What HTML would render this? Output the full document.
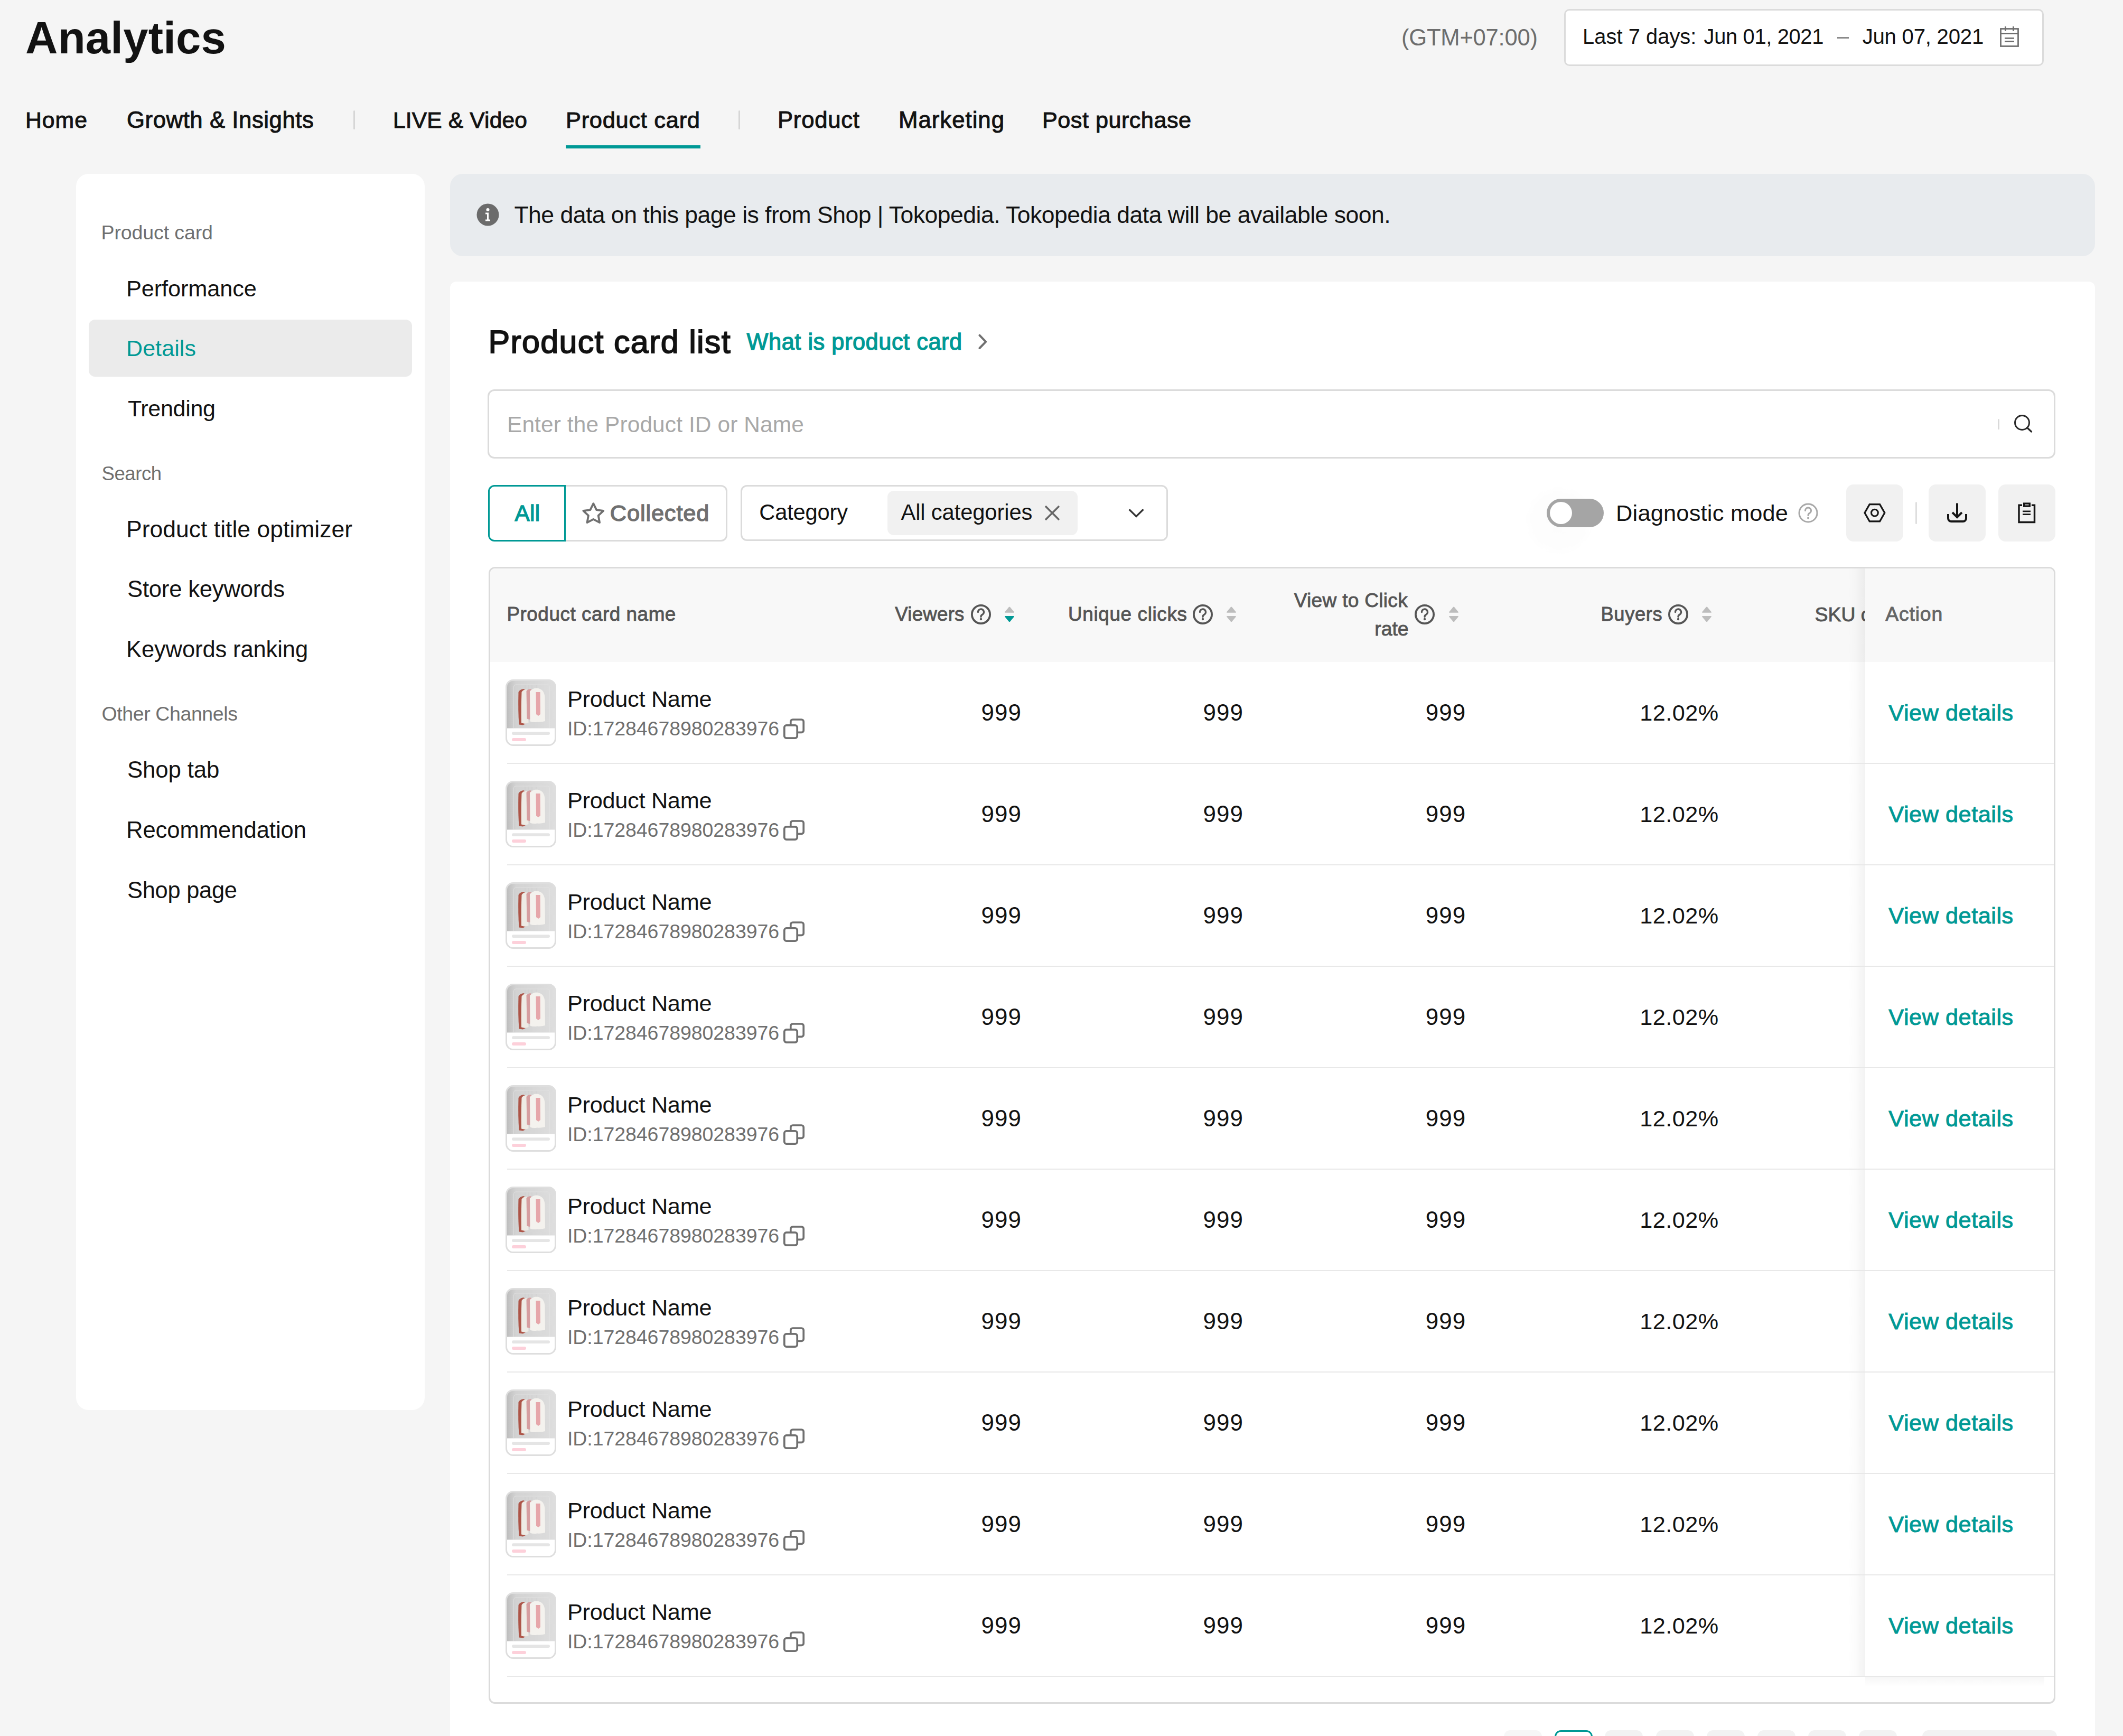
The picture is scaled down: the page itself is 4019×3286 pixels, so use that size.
<!DOCTYPE html>
<html><head><meta charset="utf-8"><style>
html,body{margin:0;padding:0;}
body{width:4019px;height:3286px;overflow:hidden;background:#f5f5f5;position:relative;font-family:"Liberation Sans",sans-serif;}
.t{position:absolute;white-space:nowrap;}
.b{position:absolute;}
.s{position:absolute;overflow:visible;}
</style></head><body>
<svg width="0" height="0" style="position:absolute"><symbol id="th" viewBox="0 0 96 126">
<defs><clipPath id="thc"><rect x="1.5" y="1.5" width="93" height="123" rx="13"/></clipPath>
<linearGradient id="thg" x1="0" x2="1" y1="0" y2="0"><stop offset="0" stop-color="#bababa"/><stop offset="0.2" stop-color="#d2d2d2"/><stop offset="1" stop-color="#dedede"/></linearGradient></defs>
<g clip-path="url(#thc)">
<rect x="0" y="0" width="96" height="126" fill="#fff"/>
<rect x="0" y="0" width="96" height="92.5" fill="url(#thg)"/>
<path d="M15.5 92V14a4 4 0 0 1 4-4h60a4 4 0 0 1 4 4v78" fill="none" stroke="#e2e2e2" stroke-width="0.8"/>
<path d="M37 11v8M44 11v8M50 11v8M58 11v6" stroke="#c4c4c4" stroke-width="0.5"/>
<path d="M24.5 24Q27 19 34 18L38 20L38 84L33 86.5L25.5 85.5Q23.5 60 24.5 24z" fill="#ad5548"/>
<path d="M30.5 24Q33 19.5 39 19L43 21L43.5 82L37 84L30 82.5Q29.5 50 30.5 24z" fill="#eeebe5"/>
<path d="M39.5 22Q42 18.5 47 18L50 20L50.5 74L45 76L40.5 74.5z" fill="#d69ea0"/>
<path d="M46 22.5Q51 17 58 16.5Q66 17 70.5 22Q74 27 74.5 34L75 79Q67 81.5 60 80.5Q52 82 46.5 79.5z" fill="#f4f2ee"/>
<path d="M57.5 24L65.6 24L66 66L62 69L58 66z" fill="#e6a6aa"/>
<rect x="12" y="99.2" width="72" height="5.8" rx="2.9" fill="#e5e5e5"/>
<rect x="12" y="111" width="27" height="6" rx="3" fill="#fdd0da"/>
</g>
<rect x="1.5" y="1.5" width="93" height="123" rx="13" fill="none" stroke="#dedede" stroke-width="3"/>
</symbol></svg>
<div class="t" style="left:48.00px;top:29.00px;font-size:85.02px;line-height:85.02px;letter-spacing:0.232px;color:#121212;font-weight:700;">Analytics</div>
<div class="t" style="left:2653.00px;top:49.00px;font-size:43.66px;line-height:43.66px;letter-spacing:-0.285px;color:#6d6d6d;">(GTM+07:00)</div>
<div class="b" style="left:2961px;top:17px;width:908px;height:107.5px;border:3px solid #dbdbdb;border-radius:10px;background:#fff;box-sizing:border-box;"></div>
<div class="t" style="left:2996.00px;top:50.00px;font-size:39.83px;line-height:39.83px;letter-spacing:0.058px;color:#121212;">Last 7 days:</div>
<div class="t" style="left:3225.60px;top:50.00px;font-size:39.89px;line-height:39.89px;letter-spacing:-0.349px;color:#121212;">Jun 01, 2021</div>
<div class="b" style="left:3478px;top:70px;width:21.5px;height:3px;background:#8a8a8a;"></div>
<div class="t" style="left:3525.70px;top:50.00px;font-size:40.21px;line-height:40.21px;letter-spacing:-0.266px;color:#121212;">Jun 07, 2021</div>
<svg class="s" style="left:3784px;top:48px" width="40" height="44" viewBox="0 0 40 44"><rect x="3.5" y="6.5" width="33" height="33" fill="none" stroke="#6f6f6f" stroke-width="2.8"/><path d="M3.5 15.4h33M12.5 2v8.8M27.5 2v8.8M11 24.4h18M11 30.5h18" stroke="#6f6f6f" stroke-width="2.9"/></svg>
<div class="t" style="left:48.00px;top:206.00px;font-size:42.73px;line-height:42.73px;letter-spacing:1.001px;color:#121212;-webkit-text-stroke:1.0px #121212;">Home</div>
<div class="t" style="left:240.00px;top:205.00px;font-size:43.70px;line-height:43.70px;letter-spacing:0.570px;color:#121212;-webkit-text-stroke:1.0px #121212;">Growth &amp; Insights</div>
<div class="t" style="left:744.00px;top:206.00px;font-size:42.53px;line-height:42.53px;letter-spacing:0.163px;color:#121212;-webkit-text-stroke:1.0px #121212;">LIVE &amp; Video</div>
<div class="t" style="left:1071.00px;top:206.00px;font-size:43.41px;line-height:43.41px;letter-spacing:0.714px;color:#121212;-webkit-text-stroke:1.0px #121212;">Product card</div>
<div class="t" style="left:1472.00px;top:205.00px;font-size:43.70px;line-height:43.70px;letter-spacing:0.723px;color:#121212;-webkit-text-stroke:1.0px #121212;">Product</div>
<div class="t" style="left:1701.00px;top:205.00px;font-size:43.80px;line-height:43.80px;letter-spacing:0.963px;color:#121212;-webkit-text-stroke:1.0px #121212;">Marketing</div>
<div class="t" style="left:1973.00px;top:206.00px;font-size:43.19px;line-height:43.19px;letter-spacing:0.493px;color:#121212;-webkit-text-stroke:1.0px #121212;">Post purchase</div>
<div class="b" style="left:669px;top:209px;width:3px;height:36px;background:#d6d6d6;border-radius:2px;"></div>
<div class="b" style="left:1398px;top:209px;width:3px;height:36px;background:#d6d6d6;border-radius:2px;"></div>
<div class="b" style="left:1071px;top:275px;width:255px;height:6px;background:#009995;"></div>
<div class="b" style="left:144px;top:329px;width:660px;height:2340px;background:#fff;border-radius:24px;"></div>
<div class="b" style="left:168px;top:605px;width:612px;height:108px;background:#ebebeb;border-radius:12px;"></div>
<div class="t" style="left:191.60px;top:422.00px;font-size:37.55px;line-height:37.55px;letter-spacing:-0.135px;color:#6f6f6f;">Product card</div>
<div class="t" style="left:192.60px;top:879.00px;font-size:36.55px;line-height:36.55px;letter-spacing:-0.478px;color:#6f6f6f;">Search</div>
<div class="t" style="left:192.60px;top:1333.00px;font-size:37.46px;line-height:37.46px;letter-spacing:-0.386px;color:#6f6f6f;">Other Channels</div>
<div class="t" style="left:239.00px;top:525.00px;font-size:43.36px;line-height:43.36px;letter-spacing:-0.124px;color:#121212;">Performance</div>
<div class="t" style="left:239.00px;top:638.00px;font-size:42.98px;line-height:42.98px;letter-spacing:0.097px;color:#009995;">Details</div>
<div class="t" style="left:242.00px;top:752.00px;font-size:43.03px;line-height:43.03px;letter-spacing:-0.323px;color:#121212;">Trending</div>
<div class="t" style="left:239.00px;top:980.00px;font-size:44.50px;line-height:44.50px;letter-spacing:0.005px;color:#121212;">Product title optimizer</div>
<div class="t" style="left:241.00px;top:1093.00px;font-size:43.69px;line-height:43.69px;letter-spacing:-0.238px;color:#121212;">Store keywords</div>
<div class="t" style="left:239.00px;top:1208.00px;font-size:43.50px;line-height:43.50px;letter-spacing:-0.112px;color:#121212;">Keywords ranking</div>
<div class="t" style="left:241.00px;top:1435.00px;font-size:43.82px;line-height:43.82px;letter-spacing:-0.140px;color:#121212;">Shop tab</div>
<div class="t" style="left:239.00px;top:1550.00px;font-size:43.60px;line-height:43.60px;letter-spacing:-0.052px;color:#121212;">Recommendation</div>
<div class="t" style="left:241.00px;top:1664.00px;font-size:43.45px;line-height:43.45px;letter-spacing:-0.274px;color:#121212;">Shop page</div>
<div class="b" style="left:852px;top:329px;width:3114px;height:156px;background:#e8ebee;border-radius:24px;"></div>
<svg class="s" style="left:902px;top:385px" width="43" height="43" viewBox="0 0 43 43"><circle cx="21.5" cy="21.5" r="21" fill="#6b6b6b"/><circle cx="21.5" cy="12" r="3" fill="#fff"/><path d="M17 17.5h6v13h3v3h-9v-3h3v-10h-3z" fill="#fff"/></svg>
<div class="t" style="left:973.40px;top:385.00px;font-size:44.57px;line-height:44.57px;letter-spacing:-0.533px;color:#121212;">The data on this page is from Shop | Tokopedia. Tokopedia data will be available soon.</div>
<div class="b" style="left:852px;top:533px;width:3114px;height:2867px;background:#fff;border-radius:12px;"></div>
<div class="t" style="left:924.50px;top:617.00px;font-size:60.98px;line-height:60.98px;letter-spacing:1.311px;color:#121212;-webkit-text-stroke:1.8px #121212;">Product card list</div>
<div class="t" style="left:1413.50px;top:626.00px;font-size:43.44px;line-height:43.44px;letter-spacing:0.492px;color:#009995;-webkit-text-stroke:1.3px #009995;">What is product card</div>
<svg class="s" style="left:1844px;top:630px" width="28" height="36" viewBox="0 0 28 36"><path d="M10.4 4.6L22.2 16.8L10.4 29" fill="none" stroke="#707070" stroke-width="4" stroke-linecap="round" stroke-linejoin="round"/></svg>
<div class="b" style="left:923px;top:737px;width:2968px;height:131px;border:3px solid #dbdbdb;border-radius:13px;box-sizing:border-box;"></div>
<div class="t" style="left:960.00px;top:783.00px;font-size:42.39px;line-height:42.39px;letter-spacing:0.134px;color:#a8a8a8;">Enter the Product ID or Name</div>
<div class="b" style="left:3781.5px;top:793px;width:3.0px;height:20px;background:#d9d9d9;border-radius:2px;"></div>
<svg class="s" style="left:3808px;top:780px" width="44" height="44" viewBox="0 0 44 44"><circle cx="20" cy="20" r="13.5" fill="none" stroke="#2a2a2a" stroke-width="3"/><path d="M29.5 29.5l8 7.5" stroke="#2a2a2a" stroke-width="3.2" stroke-linecap="round"/></svg>
<div class="b" style="left:924px;top:917.5px;width:147px;height:107.0px;border:3px solid #009995;border-radius:12px 0 0 12px;box-sizing:border-box;z-index:2;"></div>
<div class="b" style="left:1070px;top:917.5px;width:306.5px;height:107.0px;border:3px solid #dbdbdb;border-left:none;border-radius:0 12px 12px 0;box-sizing:border-box;"></div>
<div class="t" style="left:974.50px;top:951.00px;font-size:42.27px;line-height:42.27px;letter-spacing:0.286px;color:#009995;-webkit-text-stroke:1.4px #009995;">All</div>
<svg class="s" style="left:1100px;top:948px" width="46" height="46" viewBox="0 0 46 46"><path d="M23.3 5.2l5.9 12 13.1 1.6-9.6 9.1 2.4 13.3L23.3 34.8l-11.8 6.4 2.4-13.3-9.6-9.1 13.1-1.6z" fill="none" stroke="#707070" stroke-width="3.8" stroke-linejoin="round"/></svg>
<div class="t" style="left:1154.80px;top:950.00px;font-size:43.33px;line-height:43.33px;letter-spacing:0.864px;color:#707070;-webkit-text-stroke:1.4px #707070;">Collected</div>
<div class="b" style="left:1402px;top:918px;width:808.5px;height:105.5px;border:3px solid #dbdbdb;border-radius:12px;box-sizing:border-box;"></div>
<div class="t" style="left:1437.30px;top:949.00px;font-size:41.72px;line-height:41.72px;letter-spacing:-0.213px;color:#121212;">Category</div>
<div class="b" style="left:1680px;top:929px;width:360px;height:83.5px;background:#f1f1f1;border-radius:12px;"></div>
<div class="t" style="left:1705.40px;top:949.00px;font-size:41.82px;line-height:41.82px;letter-spacing:-0.154px;color:#121212;">All categories</div>
<svg class="s" style="left:1974px;top:953px" width="36" height="36" viewBox="0 0 36 36"><path d="M5 5l26 26M31 5L5 31" stroke="#666" stroke-width="3.5"/></svg>
<svg class="s" style="left:2132px;top:958px" width="38" height="26" viewBox="0 0 38 26"><path d="M5.6 6.2L19 19.4L32.4 6.2" fill="none" stroke="#333" stroke-width="3.3"/></svg>
<div class="b" style="left:2885px;top:918px;width:134px;height:134px;background:radial-gradient(circle,rgba(0,0,0,0.01) 0,rgba(0,0,0,0.008) 55%,rgba(0,0,0,0) 71%);border-radius:50%;"></div>
<div class="b" style="left:2928px;top:944px;width:108px;height:54px;background:#a5a5a5;border-radius:27px;"></div>
<div class="b" style="left:2934px;top:950px;width:42px;height:42px;background:#fff;border-radius:50%;"></div>
<div class="t" style="left:3059.00px;top:950.00px;font-size:43.37px;line-height:43.37px;letter-spacing:0.217px;color:#121212;">Diagnostic mode</div>
<svg class="s" style="left:3403px;top:951px" width="40" height="40" viewBox="0 0 40 40"><circle cx="20" cy="20" r="17" fill="none" stroke="#a8a8a8" stroke-width="3"/><path d="M14.5 15.5a5.5 5.5 0 1 1 8 4.9c-1.8 1-2.5 2.2-2.5 4.1" fill="none" stroke="#a8a8a8" stroke-width="3" stroke-linecap="round"/><circle cx="20" cy="29.5" r="2" fill="#a8a8a8"/></svg>
<div class="b" style="left:3495px;top:917px;width:108px;height:108px;background:#f1f1f1;border-radius:14px;"></div>
<div class="b" style="left:3651px;top:917px;width:108px;height:108px;background:#f1f1f1;border-radius:14px;"></div>
<div class="b" style="left:3783px;top:917px;width:108px;height:108px;background:#f1f1f1;border-radius:14px;"></div>
<div class="b" style="left:3625.5px;top:950px;width:3.0px;height:42px;background:#dedede;border-radius:2px;"></div>
<svg class="s" style="left:3526px;top:950px" width="46" height="42" viewBox="0 0 46 42"><path d="M13.2 4.6h19.4l9.2 16.1-9.2 16.1h-19.4l-9.2-16.1z" fill="none" stroke="#161616" stroke-width="3.2" stroke-linejoin="miter"/><circle cx="22.9" cy="20.7" r="6.4" fill="none" stroke="#161616" stroke-width="3.1"/></svg>
<svg class="s" style="left:3683px;top:950px" width="44" height="42" viewBox="0 0 44 42"><path d="M22 2.5v28" stroke="#161616" stroke-width="4"/><path d="M13 20l9 9 9-9" fill="none" stroke="#161616" stroke-width="4"/><path d="M5 23v8a6 6 0 0 0 6 6h22a6 6 0 0 0 6-6v-8" fill="none" stroke="#161616" stroke-width="4"/></svg>
<svg class="s" style="left:3816px;top:948px" width="42" height="46" viewBox="0 0 42 46"><path d="M12 8.3H6v32.2h29.5V8.3H30" fill="none" stroke="#161616" stroke-width="3.4"/><rect x="15.7" y="5.1" width="10.6" height="5" fill="none" stroke="#161616" stroke-width="3.4"/><path d="M13 19.8h15M13 25.7h15" stroke="#161616" stroke-width="2.8"/></svg>
<div class="b" style="left:924.5px;top:1073px;width:2966.0px;height:2152px;border:3px solid #dbdbdb;border-radius:12px;box-sizing:border-box;"></div>
<div class="b" style="left:927.5px;top:1076px;width:2960.0px;height:177px;background:#f8f8f8;border-radius:9px 9px 0 0;"></div>
<div class="t" style="left:959.40px;top:1145.00px;font-size:36.84px;line-height:36.84px;letter-spacing:0.550px;color:#555555;-webkit-text-stroke:0.9px #555555;">Product card name</div>
<div class="t" style="left:1694.30px;top:1145.00px;font-size:36.68px;line-height:36.68px;letter-spacing:0.224px;color:#555555;-webkit-text-stroke:0.9px #555555;">Viewers</div>
<div class="t" style="left:2022.00px;top:1145.00px;font-size:36.90px;line-height:36.90px;letter-spacing:0.637px;color:#555555;-webkit-text-stroke:0.9px #555555;">Unique clicks</div>
<div class="t" style="left:2449.70px;top:1118.00px;font-size:37.08px;line-height:37.08px;letter-spacing:0.290px;color:#555555;-webkit-text-stroke:0.9px #555555;">View to Click</div>
<div class="t" style="left:2602.20px;top:1172.00px;font-size:37.40px;line-height:37.40px;letter-spacing:0.000px;color:#555555;-webkit-text-stroke:0.9px #555555;">rate</div>
<div class="t" style="left:3030.50px;top:1145.00px;font-size:36.26px;line-height:36.26px;letter-spacing:0.650px;color:#555555;-webkit-text-stroke:0.9px #555555;">Buyers</div>
<svg class="s" style="left:1837px;top:1143px" width="40" height="40" viewBox="0 0 40 40"><circle cx="20" cy="20" r="17.1" fill="none" stroke="#555" stroke-width="3.8"/><path d="M14.5 15.5a5.5 5.5 0 1 1 8 4.9c-1.8 1-2.5 2.2-2.5 4.1" fill="none" stroke="#555" stroke-width="3.4" stroke-linecap="round"/><circle cx="20" cy="29" r="2.2" fill="#555"/></svg>
<svg class="s" style="left:1901.0px;top:1146px" width="20" height="34" viewBox="0 0 20 34"><path d="M10 2.6Q10.7 2.6 11.2 3.2L18.7 12.3Q19.5 13.8 17.8 13.8H2.2Q0.5 13.8 1.3 12.3L8.8 3.2Q9.3 2.6 10 2.6z" fill="#bdbdbd"/><path d="M10 31.1Q10.7 31.1 11.2 30.5L18.7 21.4Q19.5 19.9 17.8 19.9H2.2Q0.5 19.9 1.3 21.4L8.8 30.5Q9.3 31.1 10 31.1z" fill="#009995"/></svg>
<svg class="s" style="left:2256.6px;top:1143px" width="40" height="40" viewBox="0 0 40 40"><circle cx="20" cy="20" r="17.1" fill="none" stroke="#555" stroke-width="3.8"/><path d="M14.5 15.5a5.5 5.5 0 1 1 8 4.9c-1.8 1-2.5 2.2-2.5 4.1" fill="none" stroke="#555" stroke-width="3.4" stroke-linecap="round"/><circle cx="20" cy="29" r="2.2" fill="#555"/></svg>
<svg class="s" style="left:2320.5px;top:1146px" width="20" height="34" viewBox="0 0 20 34"><path d="M10 2.6Q10.7 2.6 11.2 3.2L18.7 12.3Q19.5 13.8 17.8 13.8H2.2Q0.5 13.8 1.3 12.3L8.8 3.2Q9.3 2.6 10 2.6z" fill="#bdbdbd"/><path d="M10 31.1Q10.7 31.1 11.2 30.5L18.7 21.4Q19.5 19.9 17.8 19.9H2.2Q0.5 19.9 1.3 21.4L8.8 30.5Q9.3 31.1 10 31.1z" fill="#bdbdbd"/></svg>
<svg class="s" style="left:2676.7px;top:1143px" width="40" height="40" viewBox="0 0 40 40"><circle cx="20" cy="20" r="17.1" fill="none" stroke="#555" stroke-width="3.8"/><path d="M14.5 15.5a5.5 5.5 0 1 1 8 4.9c-1.8 1-2.5 2.2-2.5 4.1" fill="none" stroke="#555" stroke-width="3.4" stroke-linecap="round"/><circle cx="20" cy="29" r="2.2" fill="#555"/></svg>
<svg class="s" style="left:2741.5px;top:1146px" width="20" height="34" viewBox="0 0 20 34"><path d="M10 2.6Q10.7 2.6 11.2 3.2L18.7 12.3Q19.5 13.8 17.8 13.8H2.2Q0.5 13.8 1.3 12.3L8.8 3.2Q9.3 2.6 10 2.6z" fill="#bdbdbd"/><path d="M10 31.1Q10.7 31.1 11.2 30.5L18.7 21.4Q19.5 19.9 17.8 19.9H2.2Q0.5 19.9 1.3 21.4L8.8 30.5Q9.3 31.1 10 31.1z" fill="#bdbdbd"/></svg>
<svg class="s" style="left:3157px;top:1143px" width="40" height="40" viewBox="0 0 40 40"><circle cx="20" cy="20" r="17.1" fill="none" stroke="#555" stroke-width="3.8"/><path d="M14.5 15.5a5.5 5.5 0 1 1 8 4.9c-1.8 1-2.5 2.2-2.5 4.1" fill="none" stroke="#555" stroke-width="3.4" stroke-linecap="round"/><circle cx="20" cy="29" r="2.2" fill="#555"/></svg>
<svg class="s" style="left:3220.5px;top:1146px" width="20" height="34" viewBox="0 0 20 34"><path d="M10 2.6Q10.7 2.6 11.2 3.2L18.7 12.3Q19.5 13.8 17.8 13.8H2.2Q0.5 13.8 1.3 12.3L8.8 3.2Q9.3 2.6 10 2.6z" fill="#bdbdbd"/><path d="M10 31.1Q10.7 31.1 11.2 30.5L18.7 21.4Q19.5 19.9 17.8 19.9H2.2Q0.5 19.9 1.3 21.4L8.8 30.5Q9.3 31.1 10 31.1z" fill="#bdbdbd"/></svg>
<div class="b" style="left:3400px;top:1100px;width:131px;height:120px;overflow:hidden;">
<div class="t" style="left:35.50px;top:45.00px;font-size:37.40px;line-height:37.40px;letter-spacing:0.000px;color:#555555;-webkit-text-stroke:0.9px #555555;">SKU c</div>
</div>
<div class="b" style="left:3531px;top:1076px;width:356.5px;height:177px;background:#f8f8f8;border-radius:0 9px 0 0;"></div>
<div class="b" style="left:3531px;top:1253px;width:356.5px;height:1920px;background:#fff;"></div>
<div class="b" style="left:3499px;top:1076px;width:32px;height:2097px;background:linear-gradient(to right,rgba(0,0,0,0),rgba(0,0,0,0.012) 40%,rgba(0,0,0,0.05));"></div>
<div class="b" style="left:3531px;top:3173px;width:339px;height:20px;background:linear-gradient(to bottom,rgba(0,0,0,0.035),rgba(0,0,0,0));"></div>
<div class="t" style="left:3569.20px;top:1144.00px;font-size:37.45px;line-height:37.45px;letter-spacing:0.799px;color:#666;-webkit-text-stroke:0.9px #666;">Action</div>
<svg class="s" style="left:957px;top:1286px" width="96" height="126"><use href="#th"/></svg>
<div class="t" style="left:1074.00px;top:1302.00px;font-size:43.31px;line-height:43.31px;letter-spacing:-0.294px;color:#121212;">Product Name</div>
<div class="t" style="left:1074.00px;top:1361.00px;font-size:37.51px;line-height:37.51px;letter-spacing:-0.073px;color:#6f6f6f;">ID:17284678980283976</div>
<svg class="s" style="left:1482px;top:1358.5px" width="42" height="42" viewBox="0 0 42 42"><rect x="2.8" y="13.8" width="24.4" height="24.4" rx="4" fill="none" stroke="#707070" stroke-width="3.7"/><path d="M14.8 12V7a4 4 0 0 1 4-4h16.4a4 4 0 0 1 4 4v16.4a4 4 0 0 1-4 4H28" fill="none" stroke="#707070" stroke-width="3.7"/></svg>
<div class="t" style="left:1857.50px;top:1327.00px;font-size:43.95px;line-height:43.95px;letter-spacing:1.058px;color:#121212;">999</div>
<div class="t" style="left:2277.50px;top:1327.00px;font-size:43.95px;line-height:43.95px;letter-spacing:1.058px;color:#121212;">999</div>
<div class="t" style="left:2698.80px;top:1327.00px;font-size:43.95px;line-height:43.95px;letter-spacing:1.058px;color:#121212;">999</div>
<div class="t" style="left:3104.30px;top:1328.00px;font-size:43.20px;line-height:43.20px;letter-spacing:0.491px;color:#121212;">12.02%</div>
<div class="t" style="left:3575.30px;top:1328.00px;font-size:43.31px;line-height:43.31px;letter-spacing:0.516px;color:#009995;-webkit-text-stroke:1.0px #009995;">View details</div>
<div class="b" style="left:959.5px;top:1444px;width:2928.0px;height:2px;background:#e8e8e8;"></div>
<svg class="s" style="left:957px;top:1478px" width="96" height="126"><use href="#th"/></svg>
<div class="t" style="left:1074.00px;top:1494.00px;font-size:43.31px;line-height:43.31px;letter-spacing:-0.294px;color:#121212;">Product Name</div>
<div class="t" style="left:1074.00px;top:1553.00px;font-size:37.51px;line-height:37.51px;letter-spacing:-0.073px;color:#6f6f6f;">ID:17284678980283976</div>
<svg class="s" style="left:1482px;top:1550.5px" width="42" height="42" viewBox="0 0 42 42"><rect x="2.8" y="13.8" width="24.4" height="24.4" rx="4" fill="none" stroke="#707070" stroke-width="3.7"/><path d="M14.8 12V7a4 4 0 0 1 4-4h16.4a4 4 0 0 1 4 4v16.4a4 4 0 0 1-4 4H28" fill="none" stroke="#707070" stroke-width="3.7"/></svg>
<div class="t" style="left:1857.50px;top:1519.00px;font-size:43.95px;line-height:43.95px;letter-spacing:1.058px;color:#121212;">999</div>
<div class="t" style="left:2277.50px;top:1519.00px;font-size:43.95px;line-height:43.95px;letter-spacing:1.058px;color:#121212;">999</div>
<div class="t" style="left:2698.80px;top:1519.00px;font-size:43.95px;line-height:43.95px;letter-spacing:1.058px;color:#121212;">999</div>
<div class="t" style="left:3104.30px;top:1520.00px;font-size:43.20px;line-height:43.20px;letter-spacing:0.491px;color:#121212;">12.02%</div>
<div class="t" style="left:3575.30px;top:1520.00px;font-size:43.31px;line-height:43.31px;letter-spacing:0.516px;color:#009995;-webkit-text-stroke:1.0px #009995;">View details</div>
<div class="b" style="left:959.5px;top:1636px;width:2928.0px;height:2px;background:#e8e8e8;"></div>
<svg class="s" style="left:957px;top:1670px" width="96" height="126"><use href="#th"/></svg>
<div class="t" style="left:1074.00px;top:1686.00px;font-size:43.31px;line-height:43.31px;letter-spacing:-0.294px;color:#121212;">Product Name</div>
<div class="t" style="left:1074.00px;top:1745.00px;font-size:37.51px;line-height:37.51px;letter-spacing:-0.073px;color:#6f6f6f;">ID:17284678980283976</div>
<svg class="s" style="left:1482px;top:1742.5px" width="42" height="42" viewBox="0 0 42 42"><rect x="2.8" y="13.8" width="24.4" height="24.4" rx="4" fill="none" stroke="#707070" stroke-width="3.7"/><path d="M14.8 12V7a4 4 0 0 1 4-4h16.4a4 4 0 0 1 4 4v16.4a4 4 0 0 1-4 4H28" fill="none" stroke="#707070" stroke-width="3.7"/></svg>
<div class="t" style="left:1857.50px;top:1711.00px;font-size:43.95px;line-height:43.95px;letter-spacing:1.058px;color:#121212;">999</div>
<div class="t" style="left:2277.50px;top:1711.00px;font-size:43.95px;line-height:43.95px;letter-spacing:1.058px;color:#121212;">999</div>
<div class="t" style="left:2698.80px;top:1711.00px;font-size:43.95px;line-height:43.95px;letter-spacing:1.058px;color:#121212;">999</div>
<div class="t" style="left:3104.30px;top:1712.00px;font-size:43.20px;line-height:43.20px;letter-spacing:0.491px;color:#121212;">12.02%</div>
<div class="t" style="left:3575.30px;top:1712.00px;font-size:43.31px;line-height:43.31px;letter-spacing:0.516px;color:#009995;-webkit-text-stroke:1.0px #009995;">View details</div>
<div class="b" style="left:959.5px;top:1828px;width:2928.0px;height:2px;background:#e8e8e8;"></div>
<svg class="s" style="left:957px;top:1862px" width="96" height="126"><use href="#th"/></svg>
<div class="t" style="left:1074.00px;top:1878.00px;font-size:43.31px;line-height:43.31px;letter-spacing:-0.294px;color:#121212;">Product Name</div>
<div class="t" style="left:1074.00px;top:1937.00px;font-size:37.51px;line-height:37.51px;letter-spacing:-0.073px;color:#6f6f6f;">ID:17284678980283976</div>
<svg class="s" style="left:1482px;top:1934.5px" width="42" height="42" viewBox="0 0 42 42"><rect x="2.8" y="13.8" width="24.4" height="24.4" rx="4" fill="none" stroke="#707070" stroke-width="3.7"/><path d="M14.8 12V7a4 4 0 0 1 4-4h16.4a4 4 0 0 1 4 4v16.4a4 4 0 0 1-4 4H28" fill="none" stroke="#707070" stroke-width="3.7"/></svg>
<div class="t" style="left:1857.50px;top:1903.00px;font-size:43.95px;line-height:43.95px;letter-spacing:1.058px;color:#121212;">999</div>
<div class="t" style="left:2277.50px;top:1903.00px;font-size:43.95px;line-height:43.95px;letter-spacing:1.058px;color:#121212;">999</div>
<div class="t" style="left:2698.80px;top:1903.00px;font-size:43.95px;line-height:43.95px;letter-spacing:1.058px;color:#121212;">999</div>
<div class="t" style="left:3104.30px;top:1904.00px;font-size:43.20px;line-height:43.20px;letter-spacing:0.491px;color:#121212;">12.02%</div>
<div class="t" style="left:3575.30px;top:1904.00px;font-size:43.31px;line-height:43.31px;letter-spacing:0.516px;color:#009995;-webkit-text-stroke:1.0px #009995;">View details</div>
<div class="b" style="left:959.5px;top:2020px;width:2928.0px;height:2px;background:#e8e8e8;"></div>
<svg class="s" style="left:957px;top:2054px" width="96" height="126"><use href="#th"/></svg>
<div class="t" style="left:1074.00px;top:2070.00px;font-size:43.31px;line-height:43.31px;letter-spacing:-0.294px;color:#121212;">Product Name</div>
<div class="t" style="left:1074.00px;top:2129.00px;font-size:37.51px;line-height:37.51px;letter-spacing:-0.073px;color:#6f6f6f;">ID:17284678980283976</div>
<svg class="s" style="left:1482px;top:2126.5px" width="42" height="42" viewBox="0 0 42 42"><rect x="2.8" y="13.8" width="24.4" height="24.4" rx="4" fill="none" stroke="#707070" stroke-width="3.7"/><path d="M14.8 12V7a4 4 0 0 1 4-4h16.4a4 4 0 0 1 4 4v16.4a4 4 0 0 1-4 4H28" fill="none" stroke="#707070" stroke-width="3.7"/></svg>
<div class="t" style="left:1857.50px;top:2095.00px;font-size:43.95px;line-height:43.95px;letter-spacing:1.058px;color:#121212;">999</div>
<div class="t" style="left:2277.50px;top:2095.00px;font-size:43.95px;line-height:43.95px;letter-spacing:1.058px;color:#121212;">999</div>
<div class="t" style="left:2698.80px;top:2095.00px;font-size:43.95px;line-height:43.95px;letter-spacing:1.058px;color:#121212;">999</div>
<div class="t" style="left:3104.30px;top:2096.00px;font-size:43.20px;line-height:43.20px;letter-spacing:0.491px;color:#121212;">12.02%</div>
<div class="t" style="left:3575.30px;top:2096.00px;font-size:43.31px;line-height:43.31px;letter-spacing:0.516px;color:#009995;-webkit-text-stroke:1.0px #009995;">View details</div>
<div class="b" style="left:959.5px;top:2212px;width:2928.0px;height:2px;background:#e8e8e8;"></div>
<svg class="s" style="left:957px;top:2246px" width="96" height="126"><use href="#th"/></svg>
<div class="t" style="left:1074.00px;top:2262.00px;font-size:43.31px;line-height:43.31px;letter-spacing:-0.294px;color:#121212;">Product Name</div>
<div class="t" style="left:1074.00px;top:2321.00px;font-size:37.51px;line-height:37.51px;letter-spacing:-0.073px;color:#6f6f6f;">ID:17284678980283976</div>
<svg class="s" style="left:1482px;top:2318.5px" width="42" height="42" viewBox="0 0 42 42"><rect x="2.8" y="13.8" width="24.4" height="24.4" rx="4" fill="none" stroke="#707070" stroke-width="3.7"/><path d="M14.8 12V7a4 4 0 0 1 4-4h16.4a4 4 0 0 1 4 4v16.4a4 4 0 0 1-4 4H28" fill="none" stroke="#707070" stroke-width="3.7"/></svg>
<div class="t" style="left:1857.50px;top:2287.00px;font-size:43.95px;line-height:43.95px;letter-spacing:1.058px;color:#121212;">999</div>
<div class="t" style="left:2277.50px;top:2287.00px;font-size:43.95px;line-height:43.95px;letter-spacing:1.058px;color:#121212;">999</div>
<div class="t" style="left:2698.80px;top:2287.00px;font-size:43.95px;line-height:43.95px;letter-spacing:1.058px;color:#121212;">999</div>
<div class="t" style="left:3104.30px;top:2288.00px;font-size:43.20px;line-height:43.20px;letter-spacing:0.491px;color:#121212;">12.02%</div>
<div class="t" style="left:3575.30px;top:2288.00px;font-size:43.31px;line-height:43.31px;letter-spacing:0.516px;color:#009995;-webkit-text-stroke:1.0px #009995;">View details</div>
<div class="b" style="left:959.5px;top:2404px;width:2928.0px;height:2px;background:#e8e8e8;"></div>
<svg class="s" style="left:957px;top:2438px" width="96" height="126"><use href="#th"/></svg>
<div class="t" style="left:1074.00px;top:2454.00px;font-size:43.31px;line-height:43.31px;letter-spacing:-0.294px;color:#121212;">Product Name</div>
<div class="t" style="left:1074.00px;top:2513.00px;font-size:37.51px;line-height:37.51px;letter-spacing:-0.073px;color:#6f6f6f;">ID:17284678980283976</div>
<svg class="s" style="left:1482px;top:2510.5px" width="42" height="42" viewBox="0 0 42 42"><rect x="2.8" y="13.8" width="24.4" height="24.4" rx="4" fill="none" stroke="#707070" stroke-width="3.7"/><path d="M14.8 12V7a4 4 0 0 1 4-4h16.4a4 4 0 0 1 4 4v16.4a4 4 0 0 1-4 4H28" fill="none" stroke="#707070" stroke-width="3.7"/></svg>
<div class="t" style="left:1857.50px;top:2479.00px;font-size:43.95px;line-height:43.95px;letter-spacing:1.058px;color:#121212;">999</div>
<div class="t" style="left:2277.50px;top:2479.00px;font-size:43.95px;line-height:43.95px;letter-spacing:1.058px;color:#121212;">999</div>
<div class="t" style="left:2698.80px;top:2479.00px;font-size:43.95px;line-height:43.95px;letter-spacing:1.058px;color:#121212;">999</div>
<div class="t" style="left:3104.30px;top:2480.00px;font-size:43.20px;line-height:43.20px;letter-spacing:0.491px;color:#121212;">12.02%</div>
<div class="t" style="left:3575.30px;top:2480.00px;font-size:43.31px;line-height:43.31px;letter-spacing:0.516px;color:#009995;-webkit-text-stroke:1.0px #009995;">View details</div>
<div class="b" style="left:959.5px;top:2596px;width:2928.0px;height:2px;background:#e8e8e8;"></div>
<svg class="s" style="left:957px;top:2630px" width="96" height="126"><use href="#th"/></svg>
<div class="t" style="left:1074.00px;top:2646.00px;font-size:43.31px;line-height:43.31px;letter-spacing:-0.294px;color:#121212;">Product Name</div>
<div class="t" style="left:1074.00px;top:2705.00px;font-size:37.51px;line-height:37.51px;letter-spacing:-0.073px;color:#6f6f6f;">ID:17284678980283976</div>
<svg class="s" style="left:1482px;top:2702.5px" width="42" height="42" viewBox="0 0 42 42"><rect x="2.8" y="13.8" width="24.4" height="24.4" rx="4" fill="none" stroke="#707070" stroke-width="3.7"/><path d="M14.8 12V7a4 4 0 0 1 4-4h16.4a4 4 0 0 1 4 4v16.4a4 4 0 0 1-4 4H28" fill="none" stroke="#707070" stroke-width="3.7"/></svg>
<div class="t" style="left:1857.50px;top:2671.00px;font-size:43.95px;line-height:43.95px;letter-spacing:1.058px;color:#121212;">999</div>
<div class="t" style="left:2277.50px;top:2671.00px;font-size:43.95px;line-height:43.95px;letter-spacing:1.058px;color:#121212;">999</div>
<div class="t" style="left:2698.80px;top:2671.00px;font-size:43.95px;line-height:43.95px;letter-spacing:1.058px;color:#121212;">999</div>
<div class="t" style="left:3104.30px;top:2672.00px;font-size:43.20px;line-height:43.20px;letter-spacing:0.491px;color:#121212;">12.02%</div>
<div class="t" style="left:3575.30px;top:2672.00px;font-size:43.31px;line-height:43.31px;letter-spacing:0.516px;color:#009995;-webkit-text-stroke:1.0px #009995;">View details</div>
<div class="b" style="left:959.5px;top:2788px;width:2928.0px;height:2px;background:#e8e8e8;"></div>
<svg class="s" style="left:957px;top:2822px" width="96" height="126"><use href="#th"/></svg>
<div class="t" style="left:1074.00px;top:2838.00px;font-size:43.31px;line-height:43.31px;letter-spacing:-0.294px;color:#121212;">Product Name</div>
<div class="t" style="left:1074.00px;top:2897.00px;font-size:37.51px;line-height:37.51px;letter-spacing:-0.073px;color:#6f6f6f;">ID:17284678980283976</div>
<svg class="s" style="left:1482px;top:2894.5px" width="42" height="42" viewBox="0 0 42 42"><rect x="2.8" y="13.8" width="24.4" height="24.4" rx="4" fill="none" stroke="#707070" stroke-width="3.7"/><path d="M14.8 12V7a4 4 0 0 1 4-4h16.4a4 4 0 0 1 4 4v16.4a4 4 0 0 1-4 4H28" fill="none" stroke="#707070" stroke-width="3.7"/></svg>
<div class="t" style="left:1857.50px;top:2863.00px;font-size:43.95px;line-height:43.95px;letter-spacing:1.058px;color:#121212;">999</div>
<div class="t" style="left:2277.50px;top:2863.00px;font-size:43.95px;line-height:43.95px;letter-spacing:1.058px;color:#121212;">999</div>
<div class="t" style="left:2698.80px;top:2863.00px;font-size:43.95px;line-height:43.95px;letter-spacing:1.058px;color:#121212;">999</div>
<div class="t" style="left:3104.30px;top:2864.00px;font-size:43.20px;line-height:43.20px;letter-spacing:0.491px;color:#121212;">12.02%</div>
<div class="t" style="left:3575.30px;top:2864.00px;font-size:43.31px;line-height:43.31px;letter-spacing:0.516px;color:#009995;-webkit-text-stroke:1.0px #009995;">View details</div>
<div class="b" style="left:959.5px;top:2980px;width:2928.0px;height:2px;background:#e8e8e8;"></div>
<svg class="s" style="left:957px;top:3014px" width="96" height="126"><use href="#th"/></svg>
<div class="t" style="left:1074.00px;top:3030.00px;font-size:43.31px;line-height:43.31px;letter-spacing:-0.294px;color:#121212;">Product Name</div>
<div class="t" style="left:1074.00px;top:3089.00px;font-size:37.51px;line-height:37.51px;letter-spacing:-0.073px;color:#6f6f6f;">ID:17284678980283976</div>
<svg class="s" style="left:1482px;top:3086.5px" width="42" height="42" viewBox="0 0 42 42"><rect x="2.8" y="13.8" width="24.4" height="24.4" rx="4" fill="none" stroke="#707070" stroke-width="3.7"/><path d="M14.8 12V7a4 4 0 0 1 4-4h16.4a4 4 0 0 1 4 4v16.4a4 4 0 0 1-4 4H28" fill="none" stroke="#707070" stroke-width="3.7"/></svg>
<div class="t" style="left:1857.50px;top:3055.00px;font-size:43.95px;line-height:43.95px;letter-spacing:1.058px;color:#121212;">999</div>
<div class="t" style="left:2277.50px;top:3055.00px;font-size:43.95px;line-height:43.95px;letter-spacing:1.058px;color:#121212;">999</div>
<div class="t" style="left:2698.80px;top:3055.00px;font-size:43.95px;line-height:43.95px;letter-spacing:1.058px;color:#121212;">999</div>
<div class="t" style="left:3104.30px;top:3056.00px;font-size:43.20px;line-height:43.20px;letter-spacing:0.491px;color:#121212;">12.02%</div>
<div class="t" style="left:3575.30px;top:3056.00px;font-size:43.31px;line-height:43.31px;letter-spacing:0.516px;color:#009995;-webkit-text-stroke:1.0px #009995;">View details</div>
<div class="b" style="left:959.5px;top:3172px;width:2928.0px;height:2px;background:#e8e8e8;"></div>
<div class="b" style="left:2847px;top:3275px;width:72px;height:65px;background:#f6f6f6;border-radius:12px;"></div>
<div class="b" style="left:3038px;top:3275px;width:72px;height:65px;background:#f2f2f2;border-radius:12px;"></div>
<div class="b" style="left:3134.8px;top:3275px;width:72.0px;height:65px;background:#f2f2f2;border-radius:12px;"></div>
<div class="b" style="left:3230.7px;top:3275px;width:72.0px;height:65px;background:#f2f2f2;border-radius:12px;"></div>
<div class="b" style="left:3326.5px;top:3275px;width:72.0px;height:65px;background:#f2f2f2;border-radius:12px;"></div>
<div class="b" style="left:3423px;top:3275px;width:72px;height:65px;background:#f2f2f2;border-radius:12px;"></div>
<div class="b" style="left:3518.8px;top:3275px;width:72.0px;height:65px;background:#f2f2f2;border-radius:12px;"></div>
<div class="b" style="left:2943px;top:3275px;width:72px;height:65px;border:3px solid #009995;border-radius:12px;box-sizing:border-box;"></div>
<div class="b" style="left:3639px;top:3275px;width:255px;height:65px;background:#f2f2f2;border-radius:12px;"></div>
</body></html>
